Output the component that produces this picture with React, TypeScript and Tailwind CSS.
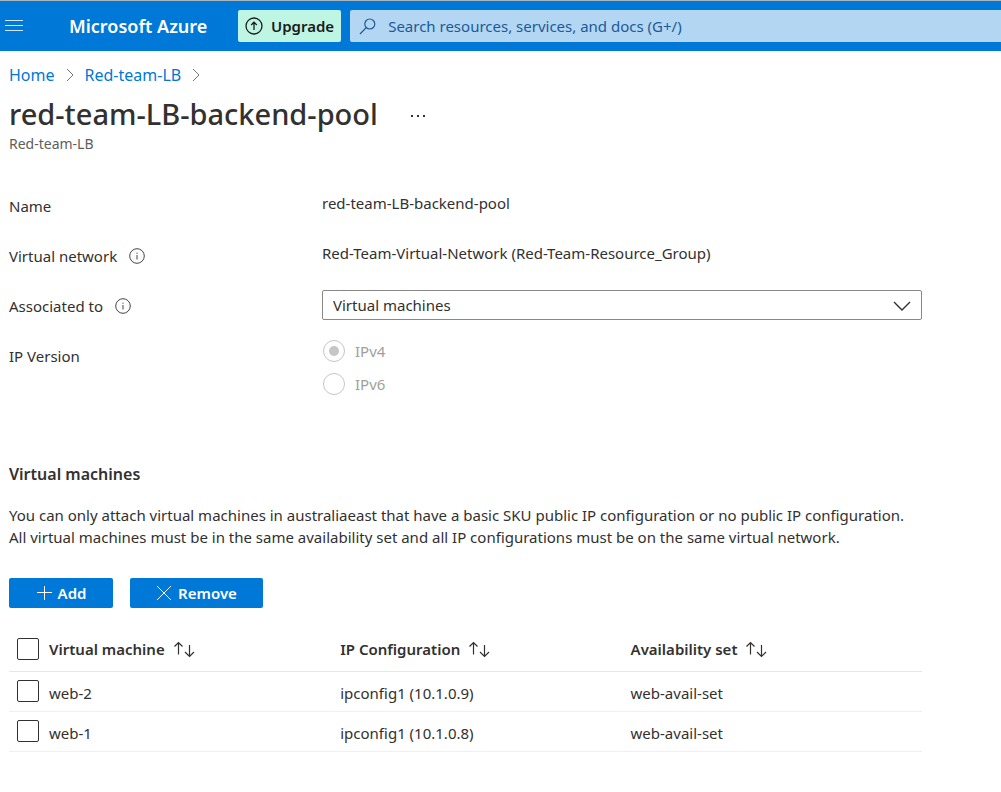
import { useState } from "react";
import type { ReactNode } from "react";

const stroke = {
  fill: "none",
  stroke: "currentColor",
  "aria-hidden": true,
} as const;

function InfoIcon() {
  return (
    <svg {...stroke} viewBox="0 0 16 16" className="size-4 text-[#444]">
      <circle cx="8" cy="8" r="7.3" />
      <path d="M8 7v4.5M8 4.6v1.2" />
    </svg>
  );
}

function SortIcon() {
  return (
    <svg {...stroke} viewBox="0 0 22 18" className="h-[18px] w-[22px]" strokeWidth="1.2">
      <path d="M5.500 14.500V2.500M1.500 6.500l4-4 4 4M16.500 5v11.500M12 12l4.500 4.500L21 12" />
    </svg>
  );
}

function CrumbChevron() {
  return (
    <svg {...stroke} viewBox="0 0 8 14" className="h-3.5 w-2 text-[#777]">
      <path d="M1 1l6 6-6 6" />
    </svg>
  );
}

function TopBar() {
  return (
    <header className="flex h-[51px] items-center border-t border-[#a9b4bd] bg-[#0078d7] pl-[5px]">
      <button type="button" aria-label="Show portal menu" className="text-[#cfe8fa]">
        <svg {...stroke} viewBox="0 0 18 14" className="h-3.5 w-[18px]" strokeWidth="1.2">
          <path d="M0 1.500h18M0 6.500h18M0 11.500h18" />
        </svg>
      </button>
      <a href="#" className="ml-[46px] w-[169px] shrink-0 text-lg leading-6 font-semibold text-white">
        Microsoft Azure
      </a>
      <button
        type="button"
        className="flex h-8 shrink-0 items-center gap-2 rounded-[2px] bg-[#bff6e3] px-[7px] text-[15px] font-semibold text-[#1b1b1b]"
      >
        <svg {...stroke} viewBox="0 0 18 18" className="size-[18px]" strokeWidth="1.3">
          <circle cx="9" cy="9" r="8" />
          <path d="M9 13V5.500M6.200 8 9 5.200 11.800 8" />
        </svg>
        Upgrade
      </button>
      <label className="ml-[9px] flex h-8 min-w-0 flex-1 items-center gap-3 rounded-l-[2px] bg-[#b3d6f3] pl-[9px] text-[#1c5a96]">
        <svg {...stroke} viewBox="0 0 17 17" className="size-[17px] shrink-0" strokeWidth="1.2">
          <circle cx="10.800" cy="6" r="5" />
          <path d="M7.200 9.600 1 16" />
        </svg>
        <input
          type="search"
          aria-label="Search resources, services, and docs"
          placeholder="Search resources, services, and docs (G+/)"
          className="min-w-0 flex-1 bg-transparent text-[15px] outline-none placeholder:text-[#1c5a96]"
        />
      </label>
    </header>
  );
}

function Field({ label, htmlFor, info, children }: { label: string; htmlFor?: string; info?: boolean; children: ReactNode }) {
  return (
    <div className="grid min-h-[50px] grid-cols-[minmax(0,313fr)_minmax(0,600fr)]">
      <div className="flex h-8 items-center gap-3">
        {htmlFor ? <label htmlFor={htmlFor}>{label}</label> : <span>{label}</span>}
        {info && <InfoIcon />}
      </div>
      {children}
    </div>
  );
}

function VersionOption({ label, checked }: { label: string; checked?: boolean }) {
  return (
    <label className="flex h-[22px] items-center gap-2.5 text-[#a19f9d]">
      <input
        type="radio"
        name="ip-version"
        disabled
        defaultChecked={checked}
        className="grid size-[22px] appearance-none place-items-center rounded-full border border-[#c8c6c4] before:size-2.5 before:rounded-full checked:before:bg-[#c8c6c4]"
      />
      {label}
    </label>
  );
}

const checkboxClass =
  "block size-[22px] appearance-none rounded-[2px] border border-[#323130] bg-white checked:bg-[#0078d7]";

const machines = [
  { name: "web-2", ip: "ipconfig1 (10.1.0.9)", set: "web-avail-set" },
  { name: "web-1", ip: "ipconfig1 (10.1.0.8)", set: "web-avail-set" },
];

function MachineTable() {
  const [selected, setSelected] = useState<string[]>([]);
  const all = selected.length === machines.length;
  const toggle = (name: string) =>
    setSelected((s) => (s.includes(name) ? s.filter((n) => n !== name) : [...s, name]));

  return (
    <table className="mt-[19px] w-full table-fixed border-collapse text-left">
      <colgroup>
        <col className="w-10" />
        <col className="w-[31.9%]" />
        <col className="w-[31.8%]" />
        <col />
      </colgroup>
      <thead>
        <tr className="h-11 border-b border-[#e6e6e6]">
          <th className="pl-2">
            <input
              type="checkbox"
              aria-label="Select all"
              className={checkboxClass}
              checked={all}
              onChange={() => setSelected(all ? [] : machines.map((m) => m.name))}
            />
          </th>
          {["Virtual machine", "IP Configuration", "Availability set"].map((title) => (
            <th key={title} className="font-semibold">
              <button type="button" className="flex items-center gap-2">
                {title}
                <SortIcon />
              </button>
            </th>
          ))}
        </tr>
      </thead>
      <tbody>
        {machines.map((m) => (
          <tr key={m.name} className="h-10 border-b border-[#efefef]">
            <td className="pl-2">
              <input
                type="checkbox"
                aria-label={`Select ${m.name}`}
                className={checkboxClass}
                checked={selected.includes(m.name)}
                onChange={() => toggle(m.name)}
              />
            </td>
            <td className="pt-1">{m.name}</td>
            <td className="pt-1">{m.ip}</td>
            <td className="pt-1">{m.set}</td>
          </tr>
        ))}
      </tbody>
    </table>
  );
}

export default function App() {
  return (
    <div className="min-h-screen bg-white font-['Noto_Sans','Open_Sans',sans-serif] text-[15px] leading-[22px] text-[#323130]">
      <TopBar />
      <main className="max-w-[922px] pl-[9px]">
        <nav aria-label="Breadcrumb" className="flex items-center gap-[11px] pt-3 text-base leading-6 text-[#0078d7]">
          <a href="#">Home</a>
          <CrumbChevron />
          <a href="#">Red-team-LB</a>
          <CrumbChevron />
        </nav>
        <div className="mt-[9px] flex items-center gap-8">
          <h1 className="text-[29px] leading-9 font-medium">red-team-LB-backend-pool</h1>
          <button type="button" aria-label="More actions" className="mt-1">
            <svg viewBox="0 0 16 4" className="h-1 w-4" fill="currentColor" aria-hidden="true">
              <path d="M1 1h2v2H1zM7 1h2v2H7zM13 1h2v2h-2z" />
            </svg>
          </button>
        </div>
        <p className="text-sm leading-6 text-[#605e5c]">Red-team-LB</p>

        <form className="mt-[34px]">
          <Field label="Name">
            <span className="pt-0.5">red-team-LB-backend-pool</span>
          </Field>
          <Field label="Virtual network" info>
            <span className="pt-0.5">Red-Team-Virtual-Network (Red-Team-Resource_Group)</span>
          </Field>
          <Field label="Associated to" htmlFor="associated" info>
            <div className="relative">
              <select
                id="associated"
                className="h-[30px] w-full appearance-none rounded-[2px] border border-[#8a8886] bg-white px-2.5"
              >
                <option>Virtual machines</option>
              </select>
              <svg {...stroke} viewBox="0 0 18 10" className="pointer-events-none absolute top-[11px] right-[11px] h-2.5 w-[18px]" strokeWidth="1.4">
                <path d="M1 1l8 8 8-8" />
              </svg>
            </div>
          </Field>
          <Field label="IP Version">
            <div role="radiogroup" aria-label="IP Version" className="flex flex-col gap-[11px] pl-px">
              <VersionOption label="IPv4" checked />
              <VersionOption label="IPv6" />
            </div>
          </Field>
        </form>

        <section className="mt-[67px]">
          <h2 className="text-base leading-6 font-semibold">Virtual machines</h2>
          <p className="mt-[18px]">
            You can only attach virtual machines in australiaeast that have a basic SKU public IP configuration or no
            public IP configuration. All virtual machines must be in the same availability set and all IP
            configurations must be on the same virtual network.
          </p>
          <div className="mt-[30px] flex gap-[17px] font-semibold text-white">
            <button type="button" className="flex h-[30px] w-[104px] items-center justify-center gap-1.5 rounded-[2px] bg-[#0078d7]">
              <svg {...stroke} viewBox="0 0 16 16" className="size-4">
                <path d="M8.500 1v14M1 7.500h15" />
              </svg>
              Add
            </button>
            <button type="button" className="flex h-[30px] w-[133px] items-center justify-center gap-1.5 rounded-[2px] bg-[#0078d7]">
              <svg {...stroke} viewBox="0 0 16 16" className="size-4">
                <path d="M1 1l14 14M15 1 1 15" />
              </svg>
              Remove
            </button>
          </div>
          <MachineTable />
        </section>
      </main>
    </div>
  );
}
